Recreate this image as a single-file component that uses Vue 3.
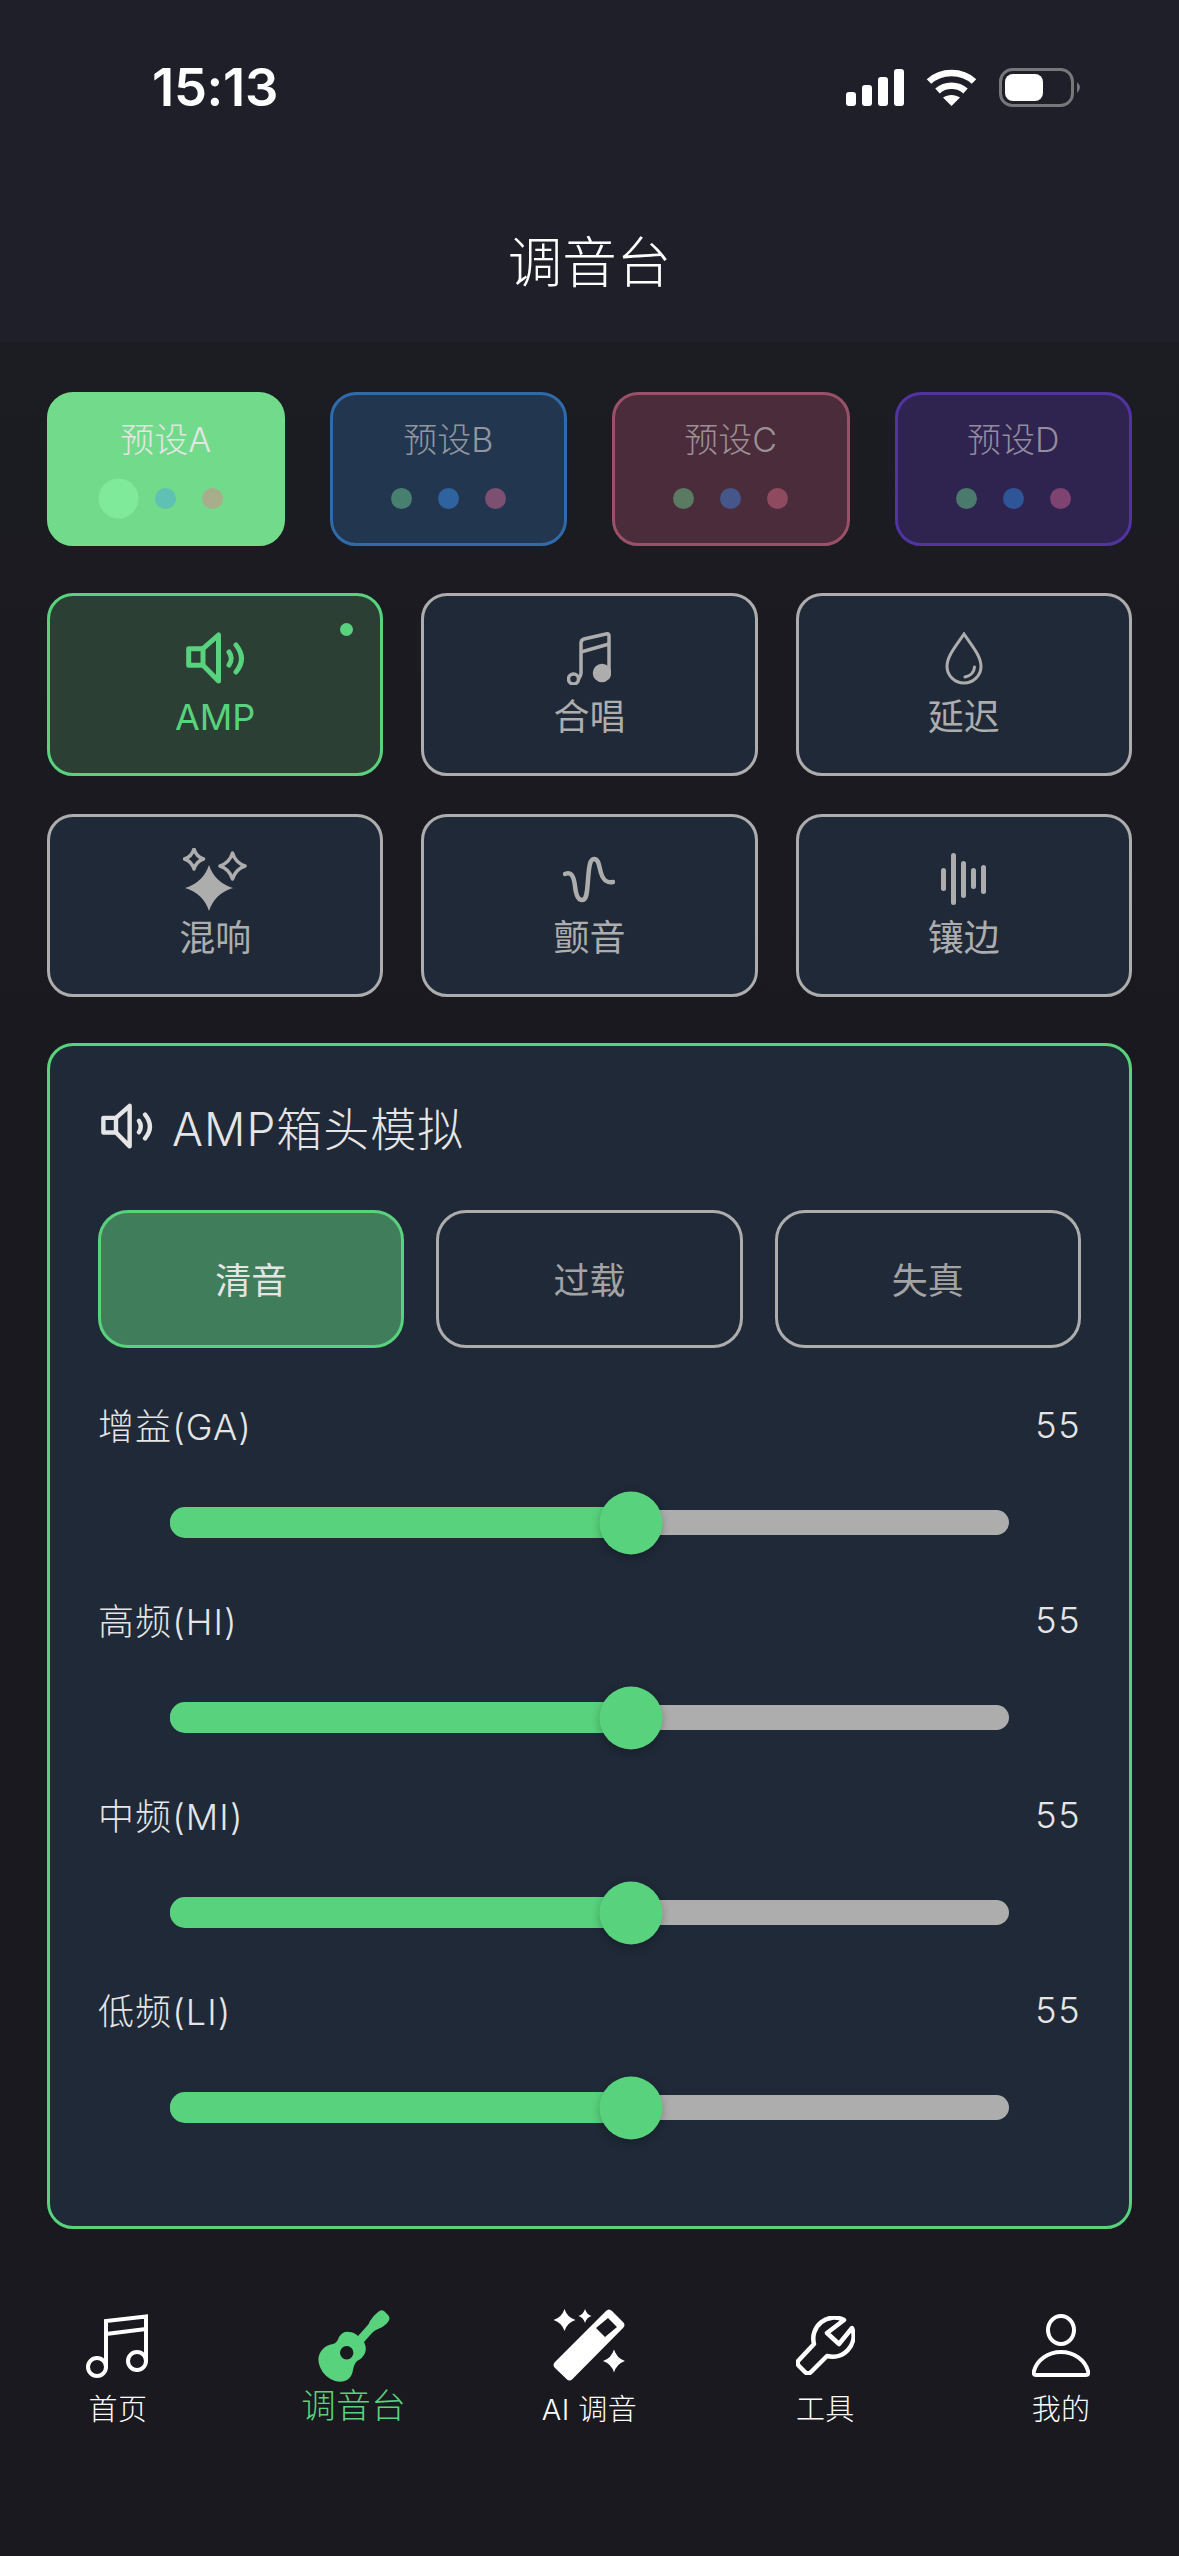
<script setup>
const star = (cx, cy, rx, ry) => {
  const kx = rx * 0.24
  const ky = ry * 0.24
  return `M${cx} ${cy - ry}Q${cx + kx} ${cy - ky} ${cx + rx} ${cy}Q${cx + kx} ${cy + ky} ${cx} ${cy + ry}Q${cx - kx} ${cy + ky} ${cx - rx} ${cy}Q${cx - kx} ${cy - ky} ${cx} ${cy - ry}Z`
}

const presets = [
  { name: "预设A", cls: "a", dots: ["#7feb9a", "#5fc0b4", "#a8ad8c"], active: true },
  { name: "预设B", cls: "b", dots: ["#47806e", "#2f639f", "#7d4f70"] },
  { name: "预设C", cls: "c", dots: ["#5a7a62", "#44568a", "#8f4a60"] },
  { name: "预设D", cls: "d", dots: ["#4a7a6c", "#2f5599", "#7f4372"] },
]

const effects = [
  { name: "AMP", icon: "amp", active: true },
  { name: "合唱", icon: "chorus" },
  { name: "延迟", icon: "drop" },
  { name: "混响", icon: "sparkle" },
  { name: "颤音", icon: "wave" },
  { name: "镶边", icon: "bars" },
]

const modes = [
  { name: "清音", active: true },
  { name: "过载" },
  { name: "失真" },
]

const sliders = [
  { label: "增益(GA)", value: 55 },
  { label: "高频(HI)", value: 55 },
  { label: "中频(MI)", value: 55 },
  { label: "低频(LI)", value: 55 },
]

const waveBars = [
  { x: 2.5, y: 15, h: 23 },
  { x: 12.5, y: 0, h: 52 },
  { x: 22.5, y: 8, h: 37 },
  { x: 32.5, y: 15, h: 21 },
  { x: 42.5, y: 12, h: 29 },
]

const tabs = [
  { name: "首页", icon: "music" },
  { name: "调音台", icon: "guitar", active: true },
  { name: "AI 调音", icon: "wand" },
  { name: "工具", icon: "wrench" },
  { name: "我的", icon: "user" },
]
</script>

<template>
  <div class="page">
    <div class="top">
      <div class="status">
        <span class="time">15:13</span>
        <div class="status-icons">
          <svg width="58" height="37" viewBox="0 0 58 37">
            <rect x="0" y="23" width="10" height="14" rx="3" fill="#fff" />
            <rect x="16" y="16" width="10" height="21" rx="3" fill="#fff" />
            <rect x="32" y="8" width="10" height="29" rx="3" fill="#fff" />
            <rect x="48" y="0" width="10" height="37" rx="3" fill="#fff" />
          </svg>
          <svg width="51" height="37" viewBox="0 0 51 37">
            <path d="M3 12.5C15 1 36 1 48 12.5" fill="none" stroke="#fff" stroke-width="6.5" />
            <path d="M11.5 22C19 15 32 15 39.5 22" fill="none" stroke="#fff" stroke-width="6.5" />
            <path d="M25.5 37L17 28.5C22 25 29 25 34 28.5Z" fill="#fff" />
          </svg>
          <svg class="battery" width="82" height="39" viewBox="0 0 82 39">
            <rect x="1.5" y="1.5" width="72" height="36" rx="12" fill="none" stroke="#77777b" stroke-width="3" />
            <rect x="6" y="6" width="38" height="27" rx="8" fill="#fff" />
            <path d="M78 14Q84 19.5 78 25Z" fill="#77777b" />
          </svg>
        </div>
      </div>
      <h1 class="title">调音台</h1>
    </div>

    <main class="content">
      <div class="presets">
        <div v-for="p in presets" :key="p.name" class="preset" :class="p.cls">
          <span class="preset-name">{{ p.name }}</span>
          <div class="dots">
            <i
              v-for="(c, i) in p.dots"
              :key="i"
              class="dot"
              :class="{ big: p.active && i === 0 }"
              :style="{ background: c }"
            ></i>
          </div>
        </div>
      </div>

      <div class="effects">
        <div v-for="fx in effects" :key="fx.name" class="effect" :class="{ on: fx.active }">
          <i v-if="fx.active" class="led"></i>
          <div class="effect-icon">
            <svg v-if="fx.icon === 'amp'" width="59" height="53" viewBox="0 0 59 53" fill="none" stroke="currentColor" stroke-width="5" stroke-linejoin="round" stroke-linecap="round">
              <path d="M2.700 16.700H17V33.300H2.700Z" />
              <path d="M17 16.700L32.500 3V49L17 33.300" />
              <path d="M43 20Q47.500 26.500 43 33" />
              <path d="M50 13Q61 26.500 50 40" />
            </svg>
            <svg v-else-if="fx.icon === 'chorus'" width="44" height="53" viewBox="0 0 44 53" fill="none" stroke="currentColor" stroke-width="3.500">
              <circle cx="6.500" cy="47" r="5" />
              <path d="M11.500 47C13 45 14 44 14 41V11Q14 8 17 7L40 1.800Q42 1.500 42 4V41" />
              <path d="M14 20L42 12" />
              <circle cx="35" cy="41" r="7.500" fill="currentColor" />
            </svg>
            <svg v-else-if="fx.icon === 'drop'" width="38" height="53" viewBox="0 0 38 53" fill="none" stroke="currentColor" stroke-width="3" stroke-linecap="round">
              <path d="M19 2C11 14 2 24 2 34.500A17 16.500 0 0 0 36 34.500C36 24 27 14 19 2Z" />
              <path d="M29.500 35Q29 43 20 45" />
            </svg>
            <svg v-else-if="fx.icon === 'sparkle'" width="64" height="63" viewBox="0 0 64 63">
              <path :d="star(26, 40, 24, 23)" fill="currentColor" />
              <path :d="star(11, 11, 9.500, 10)" fill="none" stroke="currentColor" stroke-width="3.500" stroke-linejoin="round" />
              <path :d="star(49.500, 18, 12.500, 13)" fill="none" stroke="currentColor" stroke-width="3.500" stroke-linejoin="round" />
            </svg>
            <svg v-else-if="fx.icon === 'wave'" width="52" height="47" viewBox="0 0 52 47" fill="none" stroke="currentColor" stroke-width="4.500" stroke-linecap="round">
              <path d="M2 18C9 15 11 22 12 30C13 40 15 44 19 44C24 44 24 36 25 24C26 10 27 3 31 3C36 3 36 10 38 17C40 24 43 27 50 26" />
            </svg>
            <svg v-else-if="fx.icon === 'bars'" width="45" height="52" viewBox="0 0 45 52">
              <rect v-for="b in waveBars" :key="b.x" :x="b.x - 2.5" :y="b.y" width="5" :height="b.h" rx="2.5" fill="currentColor" />
            </svg>
          </div>
          <span class="effect-name">{{ fx.name }}</span>
        </div>
      </div>

      <section class="panel">
        <div class="panel-head">
          <svg width="52" height="47" viewBox="0 0 59 53" fill="none" stroke="#e5e5e5" stroke-width="5" stroke-linejoin="round" stroke-linecap="round">
            <path d="M2.700 16.700H17V33.300H2.700Z" />
            <path d="M17 16.700L32.500 3V49L17 33.300" />
            <path d="M43 20Q47.500 26.500 43 33" />
            <path d="M50 13Q61 26.500 50 40" />
          </svg>
          <h2>AMP箱头模拟</h2>
        </div>

        <div class="modes">
          <button v-for="m in modes" :key="m.name" class="mode" :class="{ on: m.active }">{{ m.name }}</button>
        </div>

        <div class="sliders">
          <div v-for="s in sliders" :key="s.label" class="slider">
            <div class="slider-head">
              <span>{{ s.label }}</span>
              <span class="slider-value">{{ s.value }}</span>
            </div>
            <div class="track-wrap">
              <div class="track">
                <div class="fill" :style="{ width: s.value + '%' }"></div>
                <div class="thumb" :style="{ left: s.value + '%' }"></div>
              </div>
            </div>
          </div>
        </div>
      </section>
    </main>

    <nav class="tabs">
      <div v-for="t in tabs" :key="t.name" class="tab" :class="{ on: t.active }">
        <div class="tab-icon">
          <svg v-if="t.icon === 'music'" width="64" height="64" viewBox="0 0 64 64" fill="none" stroke="#fff" stroke-width="4">
            <circle cx="11" cy="53" r="9" />
            <circle cx="51" cy="47" r="9" />
            <path d="M20 53V7L60 2.500V47" />
            <path d="M20 20L60 15" />
          </svg>
          <svg v-else-if="t.icon === 'guitar'" width="72" height="72" viewBox="0 0 72 72">
            <path fill="#58d27d" fill-rule="evenodd" d="M60 2Q63 -1 66 1L70 5Q73 8 70 12Q66 17 60 19Q57 20 54 23L46 32Q49 38 47 43Q45 48 39 51Q36 54 35 60Q34 67 29 70Q24 73 17 71Q6 67 2 57Q-2 47 4 40Q8 35 15 34Q19 33 21 27Q25 21 31 22Q36 22 40 26L49 16Q51 14 52 11Q55 6 60 2ZM28.700 36A6.700 6.700 0 1 0 28.700 49.400A6.700 6.700 0 1 0 28.700 36Z" />
          </svg>
          <svg v-else-if="t.icon === 'wand'" width="72" height="73" viewBox="0 0 72 73">
            <path fill="#fff" fill-rule="evenodd" d="M53 2Q56 -1 59 2L70 13Q73 16 70 19L19.500 70Q16.500 73 13.500 70L2 59Q-1 56 2 53ZM55 9L43 19L52 28L64 18Z" />
            <path :d="star(11.500, 11, 11, 11)" fill="#fff" />
            <path :d="star(32, 7, 6.500, 7)" fill="#fff" />
            <path :d="star(61, 52, 11, 11.500)" fill="#fff" />
          </svg>
          <svg v-else-if="t.icon === 'wrench'" width="59" height="59" viewBox="0 0 59 59" fill="none" stroke="#fff" stroke-width="4.500" stroke-linejoin="round">
            <path d="M48 4A21 21 0 0 0 18 28L3 44Q0 47 3 50L9 56Q12 59 15 56L31 40A21 21 0 0 0 56 12L43 28L31 17Z" />
          </svg>
          <svg v-else-if="t.icon === 'user'" width="58" height="64" viewBox="0 0 58 64" fill="none" stroke="#fff" stroke-width="4">
            <ellipse cx="29" cy="16" rx="13" ry="14" />
            <path d="M4 61Q1 61 2 57C5 46 16 38 29 38C42 38 53 46 56 57Q57 61 54 61Z" stroke-linejoin="round" />
          </svg>
        </div>
        <span class="tab-name">{{ t.name }}</span>
      </div>
    </nav>
  </div>
</template>

<style>
html,
body {
  margin: 0;
  background: #1a191f;
}
</style>

<style scoped>
.page {
  width: 1179px;
  height: 2556px;
  overflow: hidden;
  display: flex;
  flex-direction: column;
  background: linear-gradient(#1c1c23 343px, #1a191f 1000px);
  font-family: Inter, "Noto Sans CJK SC", sans-serif;
  font-weight: 300;
}

.top {
  height: 343px;
  box-sizing: border-box;
  padding-top: 54px;
  background: #1e1f28;
  flex-shrink: 0;
}

.status {
  height: 66px;
  padding: 0 98px 0 152px;
  display: flex;
  align-items: center;
  justify-content: space-between;
}

.time {
  color: #fff;
  font-size: 52.5px;
  font-weight: 600;
  letter-spacing: -0.3px;
}

.status-icons {
  display: flex;
  align-items: center;
  gap: 22px;
}

.title {
  margin: 102px 0 0;
  color: #fff;
  text-align: center;
  font-size: 54.5px;
  line-height: 80px;
  font-weight: 300;
}

.content {
  padding: 49px 47px 0;
}

.presets {
  display: grid;
  grid-template-columns: repeat(4, 1fr);
  gap: 45px;
}

.preset {
  height: 154px;
  box-sizing: border-box;
  border: 3px solid;
  border-radius: 26px;
  padding-top: 23px;
  display: flex;
  flex-direction: column;
  align-items: center;
  font-size: 34px;
  line-height: 44px;
}

.preset.a {
  background: #72db8b;
  border-color: #72db8b;
  color: #e4e6e4;
}

.preset.b {
  background: #23364f;
  border-color: #2f6aab;
  color: #92969f;
}

.preset.c {
  background: #4a2c3a;
  border-color: #9b5068;
  color: #9c9096;
}

.preset.d {
  background: #2f2450;
  border-color: #5233a3;
  color: #918c9e;
}

.dots {
  margin-top: 26px;
  display: flex;
  gap: 26px;
}

.dot {
  width: 21px;
  height: 21px;
  border-radius: 50%;
}

.dot.big {
  transform: scale(1.9);
}

.effects {
  margin-top: 47px;
  display: grid;
  grid-template-columns: repeat(3, 1fr);
  gap: 38px;
}

.effect {
  position: relative;
  height: 183px;
  box-sizing: border-box;
  background: #1f2937;
  border: 3px solid #adadad;
  border-radius: 26px;
  color: #adadad;
  display: flex;
  flex-direction: column;
  align-items: center;
}

.effect.on {
  background: #2b3f35;
  border-color: #58d27d;
  color: #58d27d;
}

.effect-icon {
  height: 70px;
  margin-top: 27px;
  display: flex;
  align-items: center;
  justify-content: center;
}

.effect-name {
  font-size: 36px;
  line-height: 44px;
  margin-top: 2px;
  font-weight: 400;
}

.led {
  position: absolute;
  top: 27px;
  right: 27px;
  width: 13px;
  height: 13px;
  border-radius: 50%;
  background: #58d27d;
}

.panel {
  margin-top: 46px;
  height: 1186px;
  box-sizing: border-box;
  background: #1f2937;
  border: 3px solid #58d27d;
  border-radius: 26px;
  padding: 50px 48px 0;
}

.panel-head {
  height: 60px;
  display: flex;
  align-items: center;
  gap: 19px;
  margin-left: 3px;
}

.panel-head h2 {
  margin: 0;
  color: #e5e5e5;
  font-size: 46px;
  font-weight: 300;
  letter-spacing: 1px;
}

.modes {
  margin-top: 54px;
  display: grid;
  grid-template-columns: repeat(3, 1fr);
  gap: 32px;
}

.mode {
  height: 138px;
  background: transparent;
  border: 3px solid #adadad;
  border-radius: 30px;
  color: #a3a3a3;
  font-family: inherit;
  font-size: 36px;
  padding: 0 0 3px;
}

.mode.on {
  background: #407d5b;
  border-color: #58d27d;
  color: #e5e5e5;
}

.sliders {
  margin-top: 54px;
  display: flex;
  flex-direction: column;
  gap: 43px;
}

.slider-head {
  height: 44px;
  display: flex;
  align-items: center;
  justify-content: space-between;
  color: #e5e5e5;
  font-size: 36px;
  letter-spacing: 1.1px;
}

.slider-value {
  padding-top: 2px;
  font-weight: 300;
  letter-spacing: 1.5px;
}

.track-wrap {
  margin-top: 45px;
  height: 63px;
  padding: 0 72px;
  display: flex;
  align-items: center;
}

.track {
  position: relative;
  width: 100%;
  height: 25px;
  border-radius: 13px;
  background: #adadad;
}

.fill {
  position: absolute;
  left: 0;
  top: -3px;
  height: 31px;
  border-radius: 15px 0 0 15px;
  background: #58d27d;
}

.thumb {
  position: absolute;
  top: 50%;
  width: 63px;
  height: 63px;
  border-radius: 50%;
  background: #58d27d;
  transform: translate(-50%, -50%);
  box-shadow: 0 3px 8px rgba(0, 0, 0, 0.25);
}

.tabs {
  margin-top: 80px;
  display: grid;
  grid-template-columns: repeat(5, 1fr);
}

.tab {
  display: flex;
  flex-direction: column;
  align-items: center;
  color: #fff;
}

.tab-icon {
  height: 73px;
  display: flex;
  align-items: center;
  justify-content: center;
}

.tab-name {
  margin-top: 10px;
  font-size: 29px;
  line-height: 36px;
  letter-spacing: 0.4px;
}

.tab.on {
  color: #58d27d;
}

.tab.on .tab-name {
  margin-top: 6px;
  font-size: 34.5px;
}
</style>
